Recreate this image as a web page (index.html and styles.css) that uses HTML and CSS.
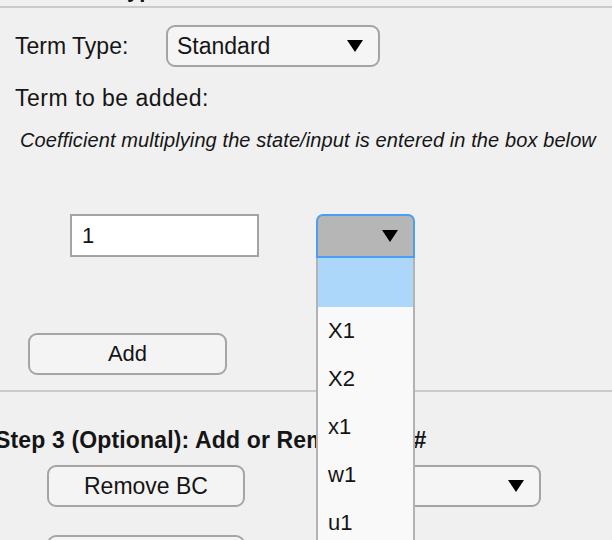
FILE: index.html
```html
<!DOCTYPE html>
<html>
<head>
<meta charset="utf-8">
<link rel="stylesheet" href="styles.css">
</head>
<body>
<div class="page">
  <div class="prev"><div class="prev-title">Term Type</div></div>
  <div class="rule"></div>
  <section class="sec1">
    <div class="row-type">
      <span class="label">Term Type:</span>
      <div class="select select-std"><span>Standard</span><span class="arrow"></span></div>
    </div>
    <div class="term-label">Term to be added:</div>
    <div class="hint">Coefficient multiplying the state/input is entered in the box below</div>
    <div class="row-input">
      <div class="coef">1</div>
      <div class="select-open">
        <span class="arrow"></span>
        <ul class="menu">
          <li class="sel"></li>
          <li>X1</li>
          <li>X2</li>
          <li>x1</li>
          <li>w1</li>
          <li>u1</li>
        </ul>
      </div>
    </div>
    <div class="btn btn-add">Add</div>
  </section>
  <div class="rule"></div>
  <section class="sec2">
    <div class="step-title">Step 3 (Optional): Add or Remove BC #</div>
    <div class="row-bc">
      <div class="btn btn-bc">Remove BC</div>
      <div class="select select-bc"><span></span><span class="arrow"></span></div>
    </div>
    <div class="btn btn-bc btn-next"></div>
  </section>
</div>
</body>
</html>
```
FILE: styles.css
```css
html, body {
  margin: 0;
  padding: 0;
}
body {
  background: #f0f0f0;
  font-family: "Liberation Sans", Arial, sans-serif;
  color: #151515;
}
.page {
  width: 612px;
  height: 540px;
  overflow: hidden;
}
.prev {
  height: 6px;
  overflow: hidden;
}
.prev-title {
  font-weight: bold;
  font-size: 22px;
  line-height: 22px;
  margin-top: -21px;
  padding-left: 57px;
}
.rule {
  height: 2px;
  background: #cbcbcb;
}
.sec1 {
  height: 382px;
  padding-top: 17px;
  box-sizing: border-box;
}
.row-type {
  display: flex;
  align-items: center;
  height: 42px;
}
.label {
  margin-left: 15px;
  width: 151px;
  font-size: 23px;
}
.select {
  box-sizing: border-box;
  border: 2px solid #a4a4a4;
  border-radius: 9px;
  background: #f5f5f5;
  display: flex;
  align-items: center;
  justify-content: space-between;
  font-size: 23px;
}
.select-std {
  width: 214px;
  height: 42px;
  padding: 0 15px 0 9px;
}
.arrow {
  width: 0;
  height: 0;
  border-left: 8px solid transparent;
  border-right: 8px solid transparent;
  border-top: 12px solid #000;
}
.term-label {
  margin-top: 18px;
  margin-left: 15px;
  font-size: 23px;
  letter-spacing: 0.5px;
  line-height: 26px;
}
.hint {
  margin-top: 17px;
  margin-left: 20px;
  font-size: 20px;
  line-height: 24px;
  font-style: italic;
  letter-spacing: 0.1px;
  white-space: nowrap;
}
.row-input {
  margin-top: 62px;
  display: flex;
  align-items: flex-start;
}
.coef {
  margin-left: 70px;
  width: 189px;
  height: 43px;
  box-sizing: border-box;
  border: 2px solid #a3a3a3;
  background: #fff;
  font-size: 22px;
  line-height: 39px;
  padding-left: 10px;
}
.select-open {
  position: relative;
  margin-left: 57px;
  width: 99px;
  height: 44px;
  box-sizing: border-box;
  border: 2px solid #4b9ef3;
  border-radius: 7px 7px 0 0;
  background: #b6b6b6;
  display: flex;
  align-items: center;
  justify-content: flex-end;
  padding-right: 15px;
}
.menu {
  position: absolute;
  top: 42px;
  left: -2px;
  width: 99px;
  box-sizing: border-box;
  margin: 0;
  padding: 0;
  list-style: none;
  border-left: 2px solid #b3b3b3;
  border-right: 2px solid #b3b3b3;
  background: #f9f9f9;
  font-size: 22px;
  z-index: 2;
}
.menu li {
  height: 48px;
  line-height: 48px;
  padding-left: 10px;
}
.menu li.sel {
  height: 49px;
  background: #acd7fb;
}
.btn {
  box-sizing: border-box;
  border: 2px solid #a5a5a5;
  border-radius: 9px;
  background: #f4f4f4;
  font-size: 22px;
  text-align: center;
}
.btn-add {
  margin-top: 75px;
  margin-left: 28px;
  width: 199px;
  height: 42px;
  line-height: 38px;
}
.sec2 {
  padding-top: 35px;
}
.step-title {
  margin-left: -5px;
  font-size: 23px;
  line-height: 26px;
  font-weight: bold;
  white-space: nowrap;
  letter-spacing: 0.15px;
}
.row-bc {
  margin-top: 12px;
  display: flex;
  align-items: center;
}
.btn-bc {
  margin-left: 47px;
  width: 198px;
  height: 42px;
  line-height: 38px;
  font-size: 23px;
}
.select-bc {
  margin-left: 85px;
  width: 211px;
  height: 42px;
  padding: 0 15px 0 9px;
}
.btn-next {
  margin-top: 28px;
}
```
